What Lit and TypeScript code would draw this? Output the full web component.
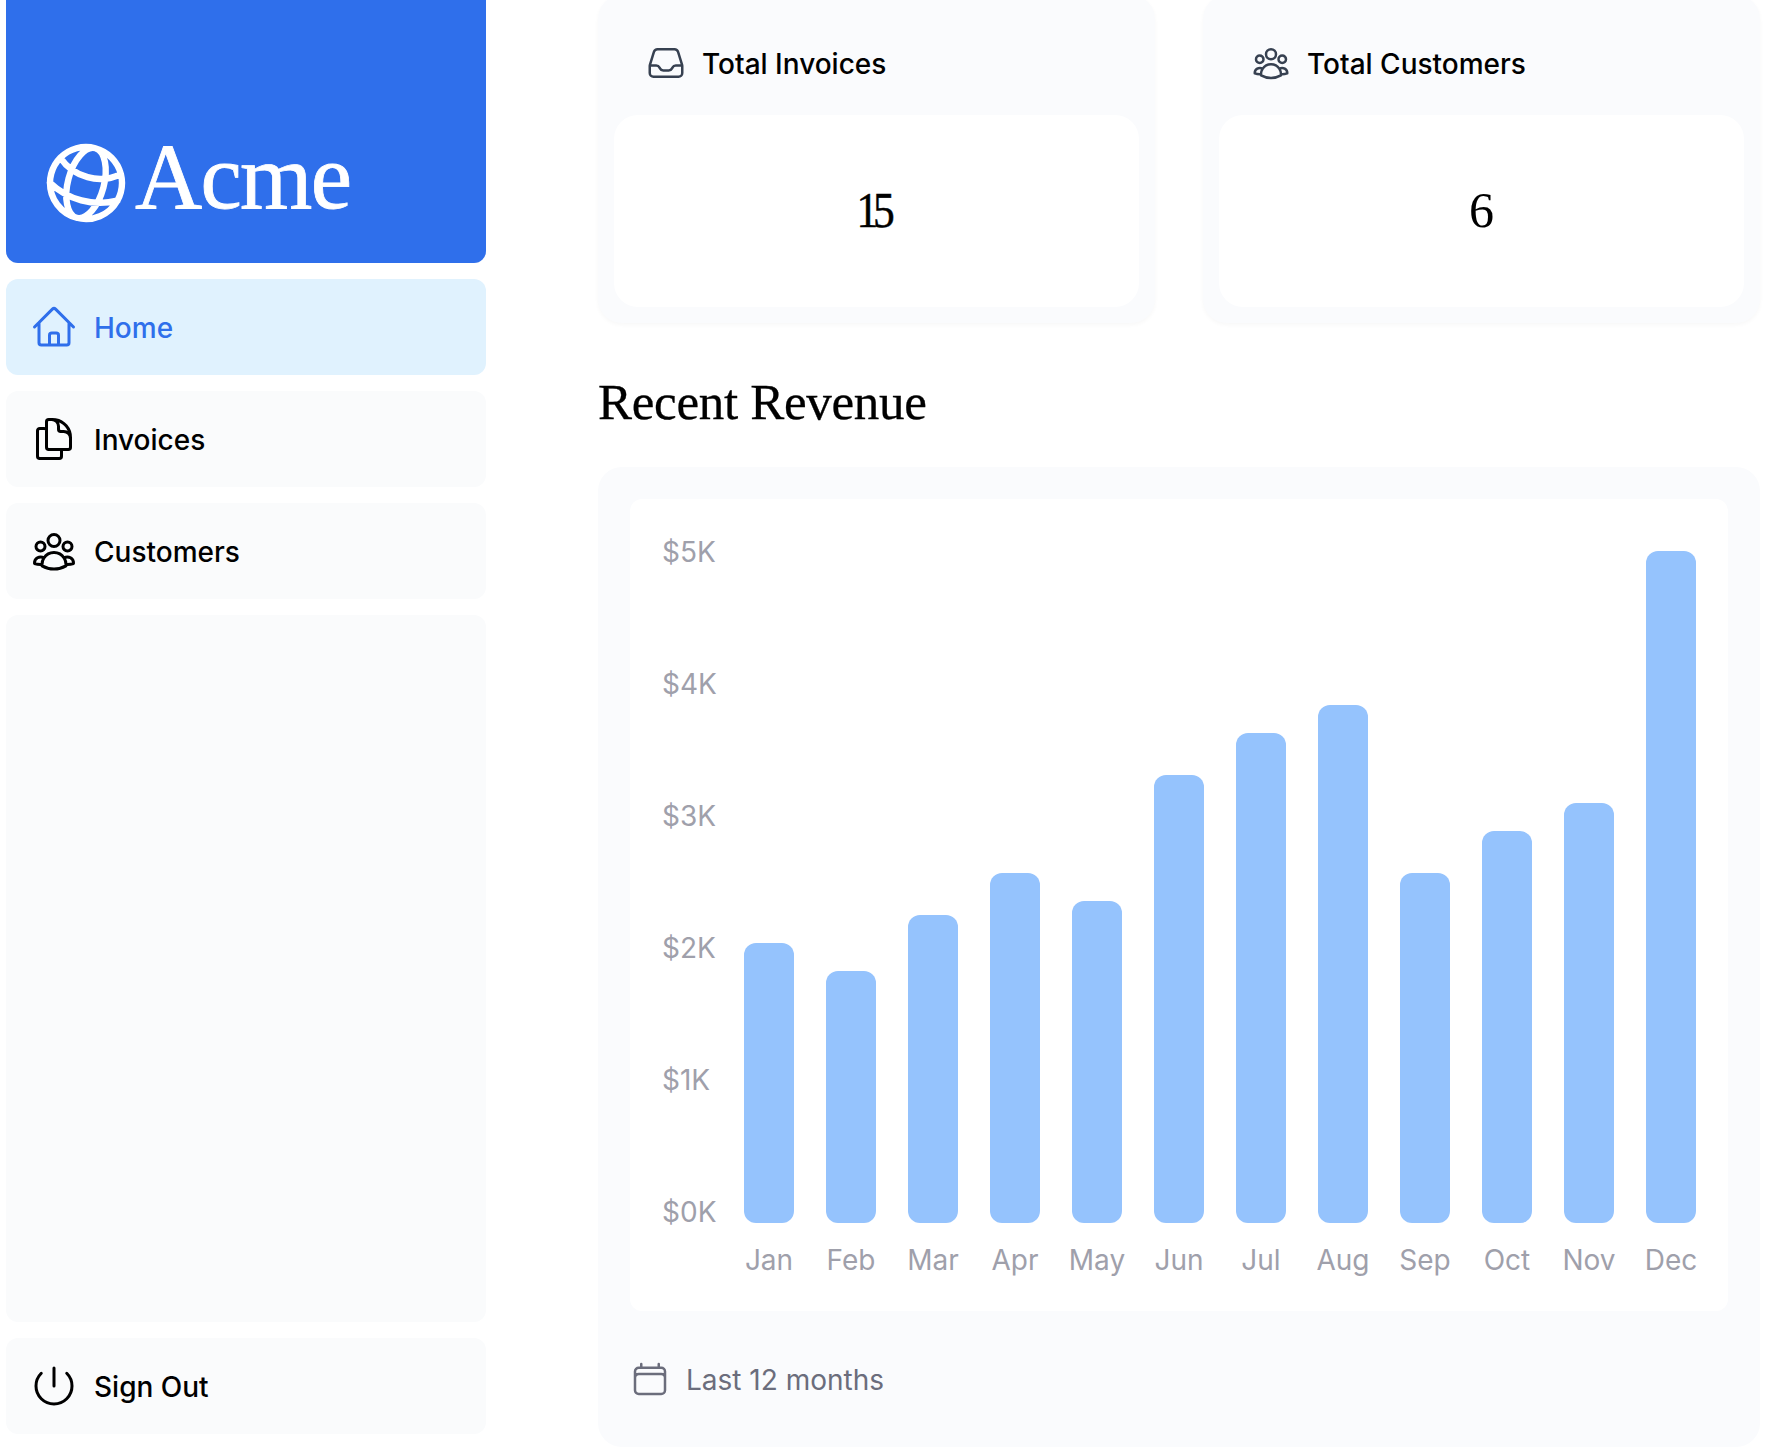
import { LitElement, html, css, svg } from "lit";
import { customElement, property } from "lit/decorators.js";
import { classMap } from "lit/directives/class-map.js";
import { styleMap } from "lit/directives/style-map.js";

const ICONS: Record<string, string> = {
  globe:
    "M12 21a9.004 9.004 0 0 0 8.716-6.747M12 21a9.004 9.004 0 0 1-8.716-6.747M12 21c2.485 0 4.5-4.03 4.5-9S14.485 3 12 3m0 18c-2.485 0-4.5-4.03-4.5-9S9.515 3 12 3m0 0a8.997 8.997 0 0 1 7.843 4.582M12 3a8.997 8.997 0 0 0-7.843 4.582m15.686 0A11.953 11.953 0 0 1 12 10.5c-2.998 0-5.74-1.1-7.843-2.918m15.686 0A8.959 8.959 0 0 1 21 12c0 .778-.099 1.533-.284 2.253m0 0A17.919 17.919 0 0 1 12 16.5c-3.162 0-6.133-.815-8.716-2.247m0 0A9.015 9.015 0 0 1 3 12c0-1.605.42-3.113 1.157-4.418",
  home: "m2.25 12 8.954-8.955c.44-.439 1.152-.439 1.591 0L21.75 12M4.5 9.75v10.125c0 .621.504 1.125 1.125 1.125H9.75v-4.875c0-.621.504-1.125 1.125-1.125h2.25c.621 0 1.125.504 1.125 1.125V21h4.125c.621 0 1.125-.504 1.125-1.125V9.75M8.25 21h8.25",
  documents:
    "M15.75 17.25v3.375c0 .621-.504 1.125-1.125 1.125h-9.75a1.125 1.125 0 0 1-1.125-1.125V7.875c0-.621.504-1.125 1.125-1.125H6.75a9.06 9.06 0 0 1 1.5.124m7.5 10.376h3.375c.621 0 1.125-.504 1.125-1.125V11.25c0-4.46-3.243-8.161-7.5-8.876a9.06 9.06 0 0 0-1.5-.124H9.375c-.621 0-1.125.504-1.125 1.125v3.5m7.5 10.375H9.375a1.125 1.125 0 0 1-1.125-1.125v-9.25m12 6.625v-1.875a3.375 3.375 0 0 0-3.375-3.375h-1.5a1.125 1.125 0 0 1-1.125-1.125v-1.5a3.375 3.375 0 0 0-3.375-3.375H9.75",
  group:
    "M18 18.72a9.094 9.094 0 0 0 3.741-.479 3 3 0 0 0-4.682-2.72m.94 3.198.001.031c0 .225-.012.447-.037.666A11.944 11.944 0 0 1 12 21c-2.17 0-4.207-.576-5.963-1.584A6.062 6.062 0 0 1 6 18.719m12 0a5.971 5.971 0 0 0-.941-3.197m0 0A5.995 5.995 0 0 0 12 12.75a5.995 5.995 0 0 0-5.058 2.772m0 0a3 3 0 0 0-4.681 2.72 8.986 8.986 0 0 0 3.74.477m.94-3.197a5.971 5.971 0 0 0-.94 3.197M15 6.75a3 3 0 1 1-6 0 3 3 0 0 1 6 0Zm6 3a2.25 2.25 0 1 1-4.5 0 2.25 2.25 0 0 1 4.5 0Zm-13.5 0a2.25 2.25 0 1 1-4.5 0 2.25 2.25 0 0 1 4.5 0Z",
  power: "M5.636 5.636a9 9 0 1 0 12.728 0M12 3v9",
  inbox:
    "M2.25 13.5h3.86a2.25 2.25 0 0 1 2.012 1.244l.256.512a2.25 2.25 0 0 0 2.013 1.244h3.218a2.25 2.25 0 0 0 2.013-1.244l.256-.512a2.25 2.25 0 0 1 2.013-1.244h3.859m-19.5.338V18a2.25 2.25 0 0 0 2.25 2.25h15A2.25 2.25 0 0 0 21.75 18v-4.162c0-.224-.034-.447-.1-.661L19.24 5.338a2.25 2.25 0 0 0-2.15-1.588H6.911a2.25 2.25 0 0 0-2.15 1.588L2.35 13.177a2.25 2.25 0 0 0-.1.661Z",
  calendar:
    "M6.75 3v2.25M17.25 3v2.25M3 18.75V7.5a2.25 2.25 0 0 1 2.25-2.25h13.5A2.25 2.25 0 0 1 21 7.5v11.25m-18 0A2.25 2.25 0 0 0 5.25 21h13.5A2.25 2.25 0 0 0 21 18.75m-18 0v-7.5A2.25 2.25 0 0 1 5.25 9h13.5A2.25 2.25 0 0 1 21 11.25v7.5",
};

@customElement("line-icon")
class LineIcon extends LitElement {
  @property() name = "home";

  static styles = css`
    :host { display: block; flex: none; }
    .icon { display: block; width: 100%; height: 100%; stroke-width: var(--icon-stroke, 1.5); }
  `;

  render() {
    return html`<svg class="icon" viewBox="0 0 24 24" fill="none" stroke="currentColor"
      stroke-linecap="round" stroke-linejoin="round" aria-hidden="true">
      ${svg`<path d=${ICONS[this.name]}></path>`}
    </svg>`;
  }
}

@customElement("side-nav")
class SideNav extends LitElement {
  static styles = css`
    :host { display: flex; flex-direction: column; gap: 16px; width: 480px; }
    .logo {
      display: flex; align-items: flex-end; box-sizing: border-box;
      height: 263px; padding: 32px; border-radius: 0 0 12px 12px;
      background: #2f6feb; color: #fff;
    }
    .globe { width: 96px; height: 96px; transform: rotate(15deg); --icon-stroke: 1.6; }
    .brand {
      font-family: "Liberation Serif", serif; font-size: 93px; line-height: 96px;
      letter-spacing: -1.7px; padding: 0 0 6px 1px; -webkit-text-stroke: 0.8px currentColor;
    }
    .link {
      display: flex; align-items: center; gap: 16px; box-sizing: border-box;
      height: 96px; padding: 0 24px; border-radius: 12px;
      background: #fafbfc; color: #000; font-weight: 500;
      text-decoration: none;
    }
    .link.active { background: #e0f2fe; color: #2f6feb; }
    .link-icon { width: 48px; height: 48px; }
    .link-label { padding-top: 2px; }
    .filler { height: 707px; border-radius: 12px; background: #fafbfc; }
  `;

  private link(icon: string, label: string, active = false) {
    return html`<a class=${classMap({ link: true, active })}>
      <line-icon class="link-icon" name=${icon}></line-icon><span class="link-label">${label}</span>
    </a>`;
  }

  render() {
    return html`
      <div class="logo">
        <line-icon class="globe" name="globe"></line-icon>
        <span class="brand">Acme</span>
      </div>
      ${this.link("home", "Home", true)}
      ${this.link("documents", "Invoices")}
      ${this.link("group", "Customers")}
      <div class="filler"></div>
      ${this.link("power", "Sign Out")}
    `;
  }
}

@customElement("stat-card")
class StatCard extends LitElement {
  @property() icon = "inbox";
  @property() label = "";
  @property() value = "";

  static styles = css`
    :host {
      display: block; box-sizing: border-box; padding: 16px; border-radius: 24px;
      background: #fafbfd; box-shadow: 0 2px 4px rgba(0, 0, 0, 0.03);
    }
    .head { display: flex; align-items: center; gap: 16px; padding: 32px; height: 40px; font-weight: 500; }
    .head-icon { width: 40px; height: 40px; color: #374151; }
    .head-label { padding-top: 2px; }
    .value {
      display: flex; justify-content: center; padding: 63px 32px 65px; border-radius: 24px;
      background: #fff; font-family: "Liberation Serif", serif; font-size: 50px; line-height: 64px;
    }
    .pair { display: inline-block; letter-spacing: -6px; margin-right: 8px; transform: scaleX(0.87); -webkit-text-stroke: 0.5px currentColor; }
  `;

  render() {
    return html`
      <div class="head">
        <line-icon class="head-icon" name=${this.icon}></line-icon><span class="head-label">${this.label}</span>
      </div>
      <div class="value"><span class=${classMap({ pair: this.value.length > 1 })}>${this.value}</span></div>
    `;
  }
}

const REVENUE: [string, number][] = [
  ["Jan", 2000], ["Feb", 1800], ["Mar", 2200], ["Apr", 2500],
  ["May", 2300], ["Jun", 3200], ["Jul", 3500], ["Aug", 3700],
  ["Sep", 2500], ["Oct", 2800], ["Nov", 3000], ["Dec", 4800],
];
const CHART_HEIGHT = 700;
const TOP_VALUE = 5000;

@customElement("revenue-chart")
class RevenueChart extends LitElement {
  static styles = css`
    :host { display: block; }
    .title {
      margin: -1px 0 33px; font-family: "Liberation Serif", serif; font-weight: 400;
      font-size: 51px; line-height: 64px; letter-spacing: -0.3px; color: #000;
      -webkit-text-stroke: 0.3px currentColor;
    }
    .panel { padding: 32px; border-radius: 24px; background: #fafbfd; }
    .chart {
      display: grid; grid-template-columns: repeat(13, 50px); gap: 32px; align-items: end;
      padding: 32px; border-radius: 12px; background: #fff; color: #9fa0ab;
    }
    .axis { display: flex; flex-direction: column; justify-content: space-between; height: 700px; margin-bottom: 47px; white-space: nowrap; }
    .month { display: flex; flex-direction: column; align-items: center; gap: 17px; margin-bottom: -1px; }
    .bar { width: 50px; border-radius: 12px; background: #95c3fd; }
    .foot { display: flex; align-items: center; gap: 16px; padding: 49px 0 16px; color: #6b6d7c; }
    .foot-icon { width: 40px; height: 40px; margin-top: -1px; }
    .foot-label { margin-bottom: -1px; }
    .chart { padding-top: 33px; }
  `;

  render() {
    return html`
      <h2 class="title">Recent Revenue</h2>
      <div class="panel">
        <div class="chart">
          <div class="axis">${[5, 4, 3, 2, 1, 0].map((k) => html`<span>$${k}K</span>`)}</div>
          ${REVENUE.map(([month, value]) => html`
            <div class="month">
              <div class="bar" style=${styleMap({ height: `${(value / TOP_VALUE) * CHART_HEIGHT}px` })}></div>
              <span>${month}</span>
            </div>`)}
        </div>
        <div class="foot">
          <line-icon class="foot-icon" name="calendar"></line-icon><span class="foot-label">Last 12 months</span>
        </div>
      </div>
    `;
  }
}

@customElement("app-root")
class AppRoot extends LitElement {
  static styles = css`
    :host {
      display: block; height: 1454px; overflow: hidden; background: #fff; color: #000;
      font-family: Inter, "Liberation Sans", sans-serif; font-size: 28px; line-height: 40px;
    }
    .page { display: flex; align-items: flex-start; gap: 112px; padding-left: 6px; }
    .main { width: 1162px; margin-top: -5px; }
    .stats { display: grid; grid-template-columns: 1fr 1fr; gap: 48px; margin-bottom: 48px; }
  `;

  render() {
    return html`
      <div class="page">
        <side-nav></side-nav>
        <main class="main">
          <div class="stats">
            <stat-card icon="inbox" label="Total Invoices" value="15"></stat-card>
            <stat-card icon="group" label="Total Customers" value="6"></stat-card>
          </div>
          <revenue-chart></revenue-chart>
        </main>
      </div>
    `;
  }
}
